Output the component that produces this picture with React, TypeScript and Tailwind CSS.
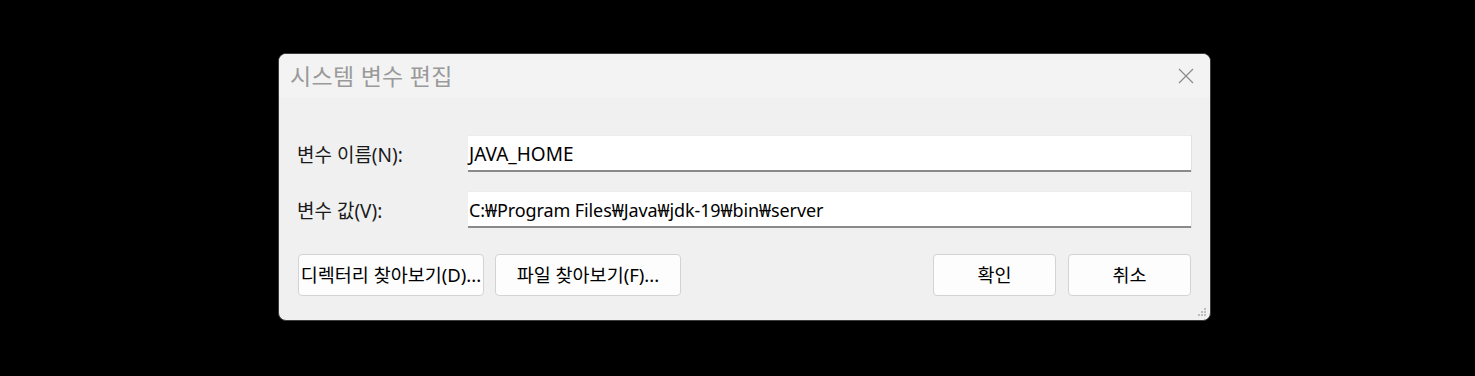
import React from 'react';

const FONT = "font-['Noto_Sans','Noto_Sans_CJK_KR',sans-serif]";

const Field = ({ label, value, valueCls }: { label: string; value: string; valueCls: string }) => (
    <div className="flex items-center h-[37px]">
        <div className="w-[189px] pl-[18px] pt-[3px] text-[19px] leading-none text-[#1a1a1a]">{label}</div>
        <div className={`w-[723px] h-[37px] bg-white border-t border-[#ececec] border-b-2 border-b-[#8a8a8a] shadow-[1px_0_0_#e2e2e2] flex items-center pl-[1px] pt-[2px] leading-none text-black ${valueCls}`}>
            {value}
        </div>
    </div>
);

const Btn = ({ children, w }: { children: React.ReactNode; w: string }) => (
    <button className={`${w} h-[42px] bg-[#fdfdfd] border border-[#d3d3d3] rounded-[4px] text-[18.5px] leading-none text-black flex items-center justify-center whitespace-nowrap`}>
        {children}
    </button>
);

export default function App() {
    return (
        <div className={`w-full h-[376px] bg-black pt-[53px] pl-[278px] ${FONT}`}>
            <div className="w-[933px] h-[268px] rounded-[8px] border border-[#3c3c3c] overflow-hidden flex flex-col bg-[#f0f0f0]">
                {/* Title bar */}
                <div className="h-[44px] bg-[#f3f3f3] flex items-center justify-between pl-[11px] pr-[15px] shrink-0">
                    <span className="text-[23px] leading-none text-[#9a9a9a] tracking-[0.3px]">시스템 변수 편집</span>
                    <svg width="16" height="16" viewBox="0 0 16 16" className="mr-[1px]">
                        <path d="M1 1 L15 15 M15 1 L1 15" stroke="#8a8a8a" strokeWidth="1.2" fill="none" />
                    </svg>
                </div>

                {/* Body */}
                <div className="flex-1 relative flex flex-col pt-[37px]">
                    <Field label="변수 이름(N):" value="JAVA_HOME" valueCls="text-[19px]" />
                    <div className="h-[19px]" />
                    <Field label="변수 값(V):" value="C:₩Program Files₩Java₩jdk-19₩bin₩server" valueCls="text-[18px] tracking-[-0.1px]" />

                    <div className="flex items-center mt-[26px] pl-[19px] pr-[19px]">
                        <Btn w="w-[186px]">디렉터리 찾아보기(D)...</Btn>
                        <div className="w-[11px]" />
                        <Btn w="w-[186px]">파일 찾아보기(F)...</Btn>
                        <div className="flex-1" />
                        <Btn w="w-[123px]">확인</Btn>
                        <div className="w-[12px]" />
                        <Btn w="w-[123px]">취소</Btn>
                    </div>

                    {/* resize grip */}
                    <svg width="10" height="10" viewBox="0 0 10 10" className="absolute right-[3px] bottom-[3px]">
                        <rect x="7" y="1" width="2" height="2" fill="#bdbdbd" />
                        <rect x="4" y="4" width="2" height="2" fill="#bdbdbd" />
                        <rect x="7" y="4" width="2" height="2" fill="#bdbdbd" />
                        <rect x="1" y="7" width="2" height="2" fill="#bdbdbd" />
                        <rect x="4" y="7" width="2" height="2" fill="#bdbdbd" />
                        <rect x="7" y="7" width="2" height="2" fill="#bdbdbd" />
                    </svg>
                </div>
            </div>
        </div>
    );
}
